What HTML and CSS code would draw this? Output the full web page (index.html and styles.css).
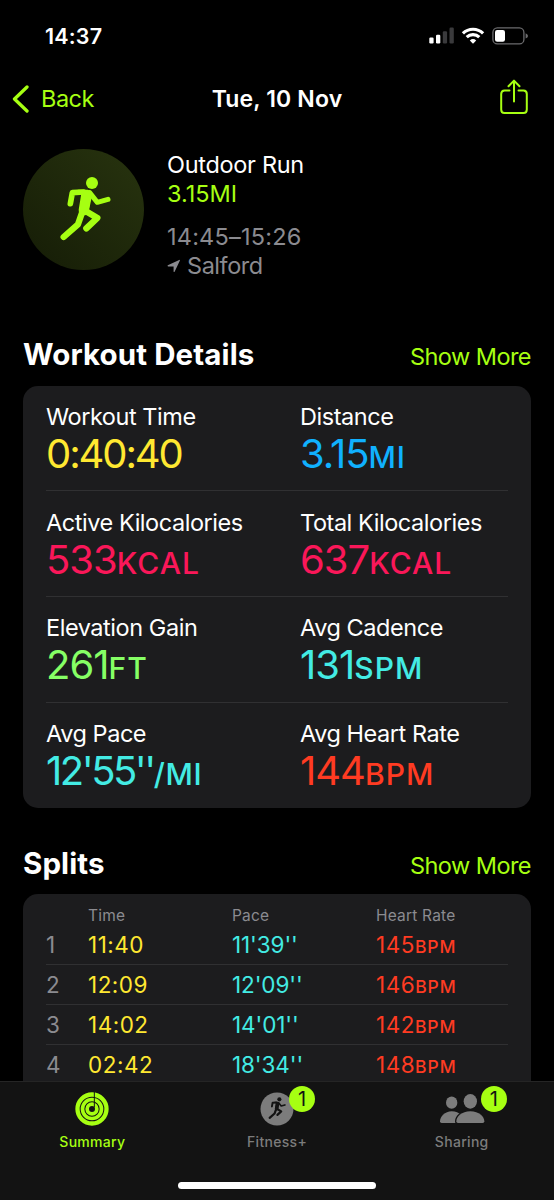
FILE: index.html
```html
<!DOCTYPE html>
<html lang="en">
<head>
    <meta charset="UTF-8">
    <meta name="viewport" content="width=device-width, initial-scale=1.0">
    <title>Outdoor Run</title>
    <link rel="stylesheet" href="styles.css">
</head>
<body>
    <svg class="defs" width="0" height="0">
        <symbol id="runner" viewBox="0 0 363 363">
            <circle cx="207" cy="102" r="18" fill="currentColor"/>
            <path d="M164 122 L194 122 Q208 126 208 136 L198 184 L168 206 L172 176 L178 140 Z" fill="currentColor"/>
            <g fill="none" stroke="currentColor" stroke-linecap="round" stroke-linejoin="round">
                <path d="M182 129 L148 131 L142 164" stroke-width="17"/>
                <path d="M200 131 L223 160 L255 151" stroke-width="15"/>
                <path d="M184 184 L223 207 L190 238" stroke-width="19"/>
                <path d="M181 180 L165 226 L122 264" stroke-width="19"/>
                <path d="M189 140 L182 184" stroke-width="30"/>
            </g>
        </symbol>
    </svg>

    <div class="screen">
        <div class="status-bar">
            <span class="clock">14:37</span>
            <div class="status-icons">
                <svg width="25" height="17" viewBox="0 0 25 17">
                    <rect x="0.3" y="10.5" width="4.3" height="6" rx="1.2" fill="#fff"/>
                    <rect x="7" y="7.8" width="4.3" height="8.7" rx="1.2" fill="#fff"/>
                    <rect x="13.8" y="4.2" width="4.3" height="12.3" rx="1.2" fill="#3a3a3c"/>
                    <rect x="20.5" y="0.5" width="4.3" height="16" rx="1.2" fill="#3a3a3c"/>
                </svg>
                <svg width="24" height="17" viewBox="0 0 24 17" fill="none" stroke="#fff" stroke-width="3.2">
                    <path d="M1.9 6.3 A14.6 14.6 0 0 1 22.1 6.3"/>
                    <path d="M5.7 10.1 A9.2 9.2 0 0 1 18.3 10.1"/>
                    <path d="M12 16.7 L8.8 13.4 A4.7 4.7 0 0 1 15.2 13.4 Z" fill="#fff" stroke="none"/>
                </svg>
                <svg width="37" height="18" viewBox="0 0 37 18">
                    <rect x="0.9" y="0.9" width="31" height="16" rx="4.5" fill="none" stroke="#6b6b6d" stroke-width="1.3"/>
                    <rect x="3" y="3" width="10" height="11.8" rx="2.2" fill="#fff"/>
                    <path d="M33.6 6.3 Q36 7.2 36 9 Q36 10.8 33.6 11.6 Z" fill="#6b6b6d"/>
                </svg>
            </div>
        </div>

        <nav class="nav-bar">
            <a class="back">
                <svg width="17" height="28" viewBox="0 0 17 28" fill="none" stroke="currentColor" stroke-width="3.3" stroke-linecap="round" stroke-linejoin="round">
                    <path d="M15 2 L2.5 14 L15 26"/>
                </svg>
                <span>Back</span>
            </a>
            <h1 class="title">Tue, 10 Nov</h1>
            <svg class="share" width="28" height="36" viewBox="0 0 28 36" fill="none" stroke="currentColor" stroke-width="2" stroke-linecap="round" stroke-linejoin="round">
                <path d="M9.5 11.5 H4.5 Q1.2 11.5 1.2 15 V30.5 Q1.2 34 4.5 34 H23.5 Q26.8 34 26.8 30.5 V15 Q26.8 11.5 23.5 11.5 H18.5"/>
                <path d="M14 22.5 V2 M8.5 7.2 L14 1.6 L19.5 7.2"/>
            </svg>
        </nav>

        <main class="content">
            <section class="workout">
                <div class="workout-icon">
                    <svg width="121" height="121"><use href="#runner"/></svg>
                </div>
                <div class="workout-info">
                    <p class="name">Outdoor Run</p>
                    <p class="dist">3.15MI</p>
                    <p class="time">14:45–15:26</p>
                    <p class="place">
                        <svg width="14" height="14" viewBox="0 0 14 14"><path d="M0.8 6.2 L12.2 0.9 Q13.2 0.7 12.8 1.7 L7.6 12.7 Q6.8 13.4 6.6 12.4 V7.4 H1.2 Q0 7 0.8 6.2 Z" fill="currentColor"/></svg>
                        <span>Salford</span>
                    </p>
                </div>
            </section>

            <div class="section-head">
                <h2>Workout Details</h2>
                <a>Show More</a>
            </div>
            <section class="card details">
                <div class="row">
                    <div class="metric"><p class="label">Workout Time</p><p class="value yellow clock-value">0:40:40</p></div>
                    <div class="metric"><p class="label">Distance</p><p class="value blue">3.15<small>MI</small></p></div>
                </div>
                <div class="row">
                    <div class="metric"><p class="label">Active Kilocalories</p><p class="value pink">533<small>KCAL</small></p></div>
                    <div class="metric"><p class="label">Total Kilocalories</p><p class="value pink">637<small>KCAL</small></p></div>
                </div>
                <div class="row">
                    <div class="metric"><p class="label">Elevation Gain</p><p class="value green">261<small>FT</small></p></div>
                    <div class="metric"><p class="label">Avg Cadence</p><p class="value teal">131<small>SPM</small></p></div>
                </div>
                <div class="row">
                    <div class="metric"><p class="label">Avg Pace</p><p class="value teal pace-value">12'55''<small>/MI</small></p></div>
                    <div class="metric"><p class="label">Avg Heart Rate</p><p class="value red">144<small>BPM</small></p></div>
                </div>
            </section>

            <div class="section-head splits-head">
                <h2>Splits</h2>
                <a>Show More</a>
            </div>
            <section class="card splits">
                <div class="split head"><span></span><span>Time</span><span>Pace</span><span>Heart Rate</span></div>
                <div class="split"><span class="num">1</span><span class="yellow">11:40</span><span class="teal">11'39''</span><span class="red">145<small>BPM</small></span></div>
                <div class="split"><span class="num">2</span><span class="yellow">12:09</span><span class="teal">12'09''</span><span class="red">146<small>BPM</small></span></div>
                <div class="split"><span class="num">3</span><span class="yellow">14:02</span><span class="teal">14'01''</span><span class="red">142<small>BPM</small></span></div>
                <div class="split"><span class="num">4</span><span class="yellow">02:42</span><span class="teal">18'34''</span><span class="red">148<small>BPM</small></span></div>
            </section>
        </main>

        <footer class="tab-bar">
            <div class="tabs">
                <a class="tab active">
                    <span class="tab-icon">
                        <svg width="34" height="34" viewBox="0 0 102 102">
                            <g fill="none" stroke="currentColor">
                                <circle cx="51" cy="51" r="43.5" stroke-width="13"/>
                                <circle cx="51" cy="51" r="28.5" stroke-width="11"/>
                                <circle cx="51" cy="51" r="14.5" stroke-width="11"/>
                            </g>
                            <path d="M58 0 V46" stroke="#131313" stroke-width="3"/>
                        </svg>
                    </span>
                    <span class="tab-label">Summary</span>
                </a>
                <a class="tab">
                    <span class="tab-icon">
                        <svg width="34" height="34" viewBox="0 0 34 34">
                            <circle cx="17" cy="17" r="16.5" fill="currentColor"/>
                            <use class="runner-small" href="#runner" x="-4.3" y="-4.3" width="41.5" height="41.5"/>
                        </svg>
                        <span class="badge">1</span>
                    </span>
                    <span class="tab-label">Fitness+</span>
                </a>
                <a class="tab">
                    <span class="tab-icon">
                        <svg width="46" height="34" viewBox="0 0 138 102" fill="currentColor">
                            <ellipse cx="38" cy="32" rx="17" ry="18.5"/>
                            <path d="M8 93 Q3 93 3 88 C3 74 18 58 38 58 C50 58 60 62 66 70 V93 Z"/>
                            <path d="M57 93 Q52 93 52 88 C52 74 68 58 94 58 C120 58 136 74 136 88 Q136 93 131 93 Z" stroke="#131313" stroke-width="8" paint-order="stroke"/>
                            <ellipse cx="94" cy="28" rx="20" ry="22"/>
                        </svg>
                        <span class="badge badge-sharing">1</span>
                    </span>
                    <span class="tab-label">Sharing</span>
                </a>
            </div>
            <div class="home-indicator"></div>
        </footer>
    </div>
</body>
</html>
```
FILE: styles.css
```css
:root { --lime: #a6ff12; --card: #1c1c1e; --bar: #131313; --gray: #8b8b90; --line: #303032; }
* { box-sizing: border-box; }
body { margin: 0; background-color: #000; color: #fff; font-family: Inter, "Liberation Sans", sans-serif; font-size: 23.5px; }
p, h1, h2 { margin: 0; }
.defs { display: block; }
.screen { width: 554px; height: 1200px; display: flex; flex-direction: column; overflow: hidden; }

.status-bar { height: 71px; flex: none; display: flex; align-items: center; justify-content: space-between; padding: 0 25px 0 45px; }
.clock { font-size: 21.5px; font-weight: 600; letter-spacing: 0.2px; }
.status-icons { display: flex; align-items: center; gap: 7px; }

.nav-bar { height: 55px; flex: none; display: grid; grid-template-columns: 1fr auto 1fr; align-items: center; padding: 0 12px; color: var(--lime); }
.back { display: flex; align-items: center; gap: 12px; letter-spacing: -0.5px; }
.title { color: #fff; font-size: 23px; font-weight: 600; letter-spacing: 0.15px; }
.share { justify-self: end; margin: 0 14px 3px 0; }

.content { flex: 1; min-height: 0; overflow: hidden; padding: 23px 23px 0; }
.workout { display: flex; gap: 23px; height: 131px; }
.workout-icon { width: 121px; height: 121px; flex: none; border-radius: 50%; color: var(--lime); background: linear-gradient(45deg, #151c06, #28340f); }
.workout-icon svg { display: block; }
.workout-info { line-height: 29px; letter-spacing: -0.3px; padding-top: 1px; }
.dist { color: var(--lime); letter-spacing: 0; }
.time { color: var(--gray); margin-top: 14px; letter-spacing: 0.2px; }
.place { color: var(--gray); display: flex; align-items: center; gap: 6px; letter-spacing: -0.45px; }

.section-head { display: flex; justify-content: space-between; align-items: baseline; margin-top: 55px; height: 50.5px; line-height: 38px; }
.section-head h2 { font-size: 29.5px; font-weight: 700; letter-spacing: 0.1px; }
.section-head a { color: var(--lime); letter-spacing: -0.55px; }
.splits-head { margin-top: 35.5px; }

.card { background-color: var(--card); border-radius: 15px; padding: 0 23px; }
.row { display: grid; grid-template-columns: 254px 1fr; height: 105.7px; padding-top: 16.5px; border-bottom: 1px solid var(--line); }
.row:last-child { border-bottom: none; }
.label { line-height: 30px; letter-spacing: -0.45px; }
.value { font-size: 40px; line-height: 44px; letter-spacing: -1px; }
.value small { font-size: 30px; font-weight: 500; letter-spacing: 1px; }
.value.clock-value { letter-spacing: -2.1px; }
.value.pace-value { letter-spacing: -2.5px; }
.pace-value small { letter-spacing: 0.6px; }

.splits { height: 240px; padding-top: 6px; }
.split { display: grid; grid-template-columns: 42px 144px 144px 1fr; height: 40px; line-height: 39px; font-size: 22.5px; border-bottom: 1px solid var(--line); }
.split .yellow, .split .red { letter-spacing: 0.5px; }
.split .teal { letter-spacing: -0.1px; }
.split small { font-size: 17.5px; font-weight: 500; letter-spacing: 0.9px; }
.head { height: 25px; line-height: 32px; font-size: 15.5px; letter-spacing: 0.2px; color: var(--gray); border-bottom: none; }
.num { color: var(--gray); }

.yellow { color: #ffe831; }
.blue { color: #10b1ff; }
.pink { color: #fa1759; }
.green { color: #86ff65; }
.teal { color: #43ebe4; }
.red { color: #ff3b22; }

.tab-bar { height: 119px; flex: none; background-color: var(--bar); border-top: 1px solid #252525; }
.tabs { display: grid; grid-template-columns: repeat(3, 184.7px); height: 100px; }
.tab { display: flex; flex-direction: column; align-items: center; padding-top: 10px; color: #7c7c7c; }
.tab-icon { position: relative; height: 34px; }
.tab-icon svg { display: block; }
.tab-label { margin-top: 5px; font-size: 14px; line-height: 22px; font-weight: 500; letter-spacing: 0.3px; }
.active { color: var(--lime); }
.runner-small { color: var(--bar); }
.badge { position: absolute; top: -6px; left: 29px; width: 26px; height: 26px; border-radius: 50%; background-color: var(--lime); color: #131313; font-size: 20px; line-height: 26px; text-align: center; }
.badge-sharing { left: 42px; }
.home-indicator { width: 198px; height: 7px; margin: 0 auto; border-radius: 4px; background-color: #fff; }
```
